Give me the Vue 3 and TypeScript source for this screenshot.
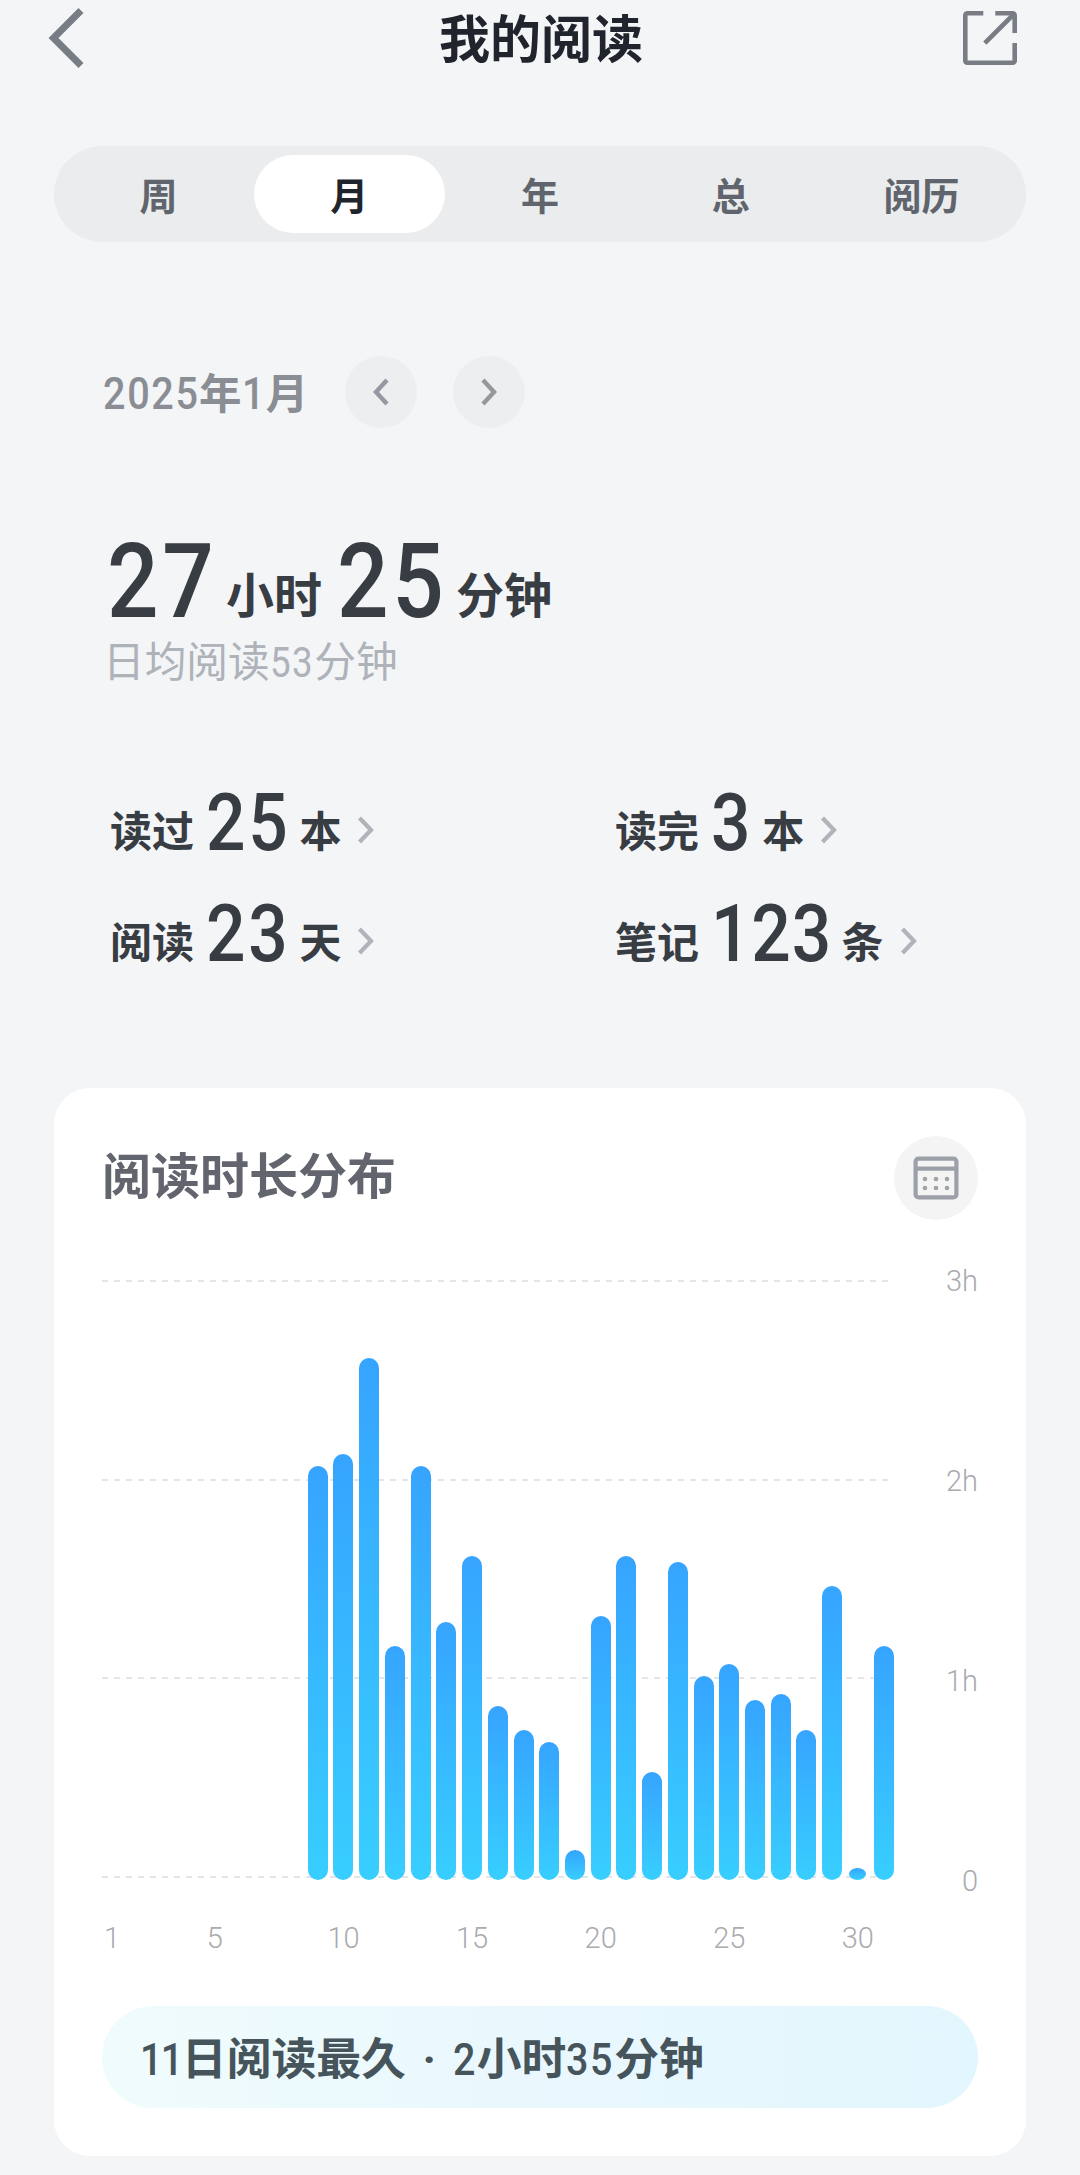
<script setup lang="ts">
import { h, type FunctionalComponent } from 'vue'

interface Stat {
  label: string
  value: string
  unit: string
}

// Condensed figures: every digit takes the same narrow cell
const DIGIT_WIDTH = 0.534
const Num: FunctionalComponent<{ text: string }> = (props) =>
  h('span', { class: 'num', style: { width: `${props.text.length * DIGIT_WIDTH}em` } }, props.text)

const tabs: string[] = ['周', '月', '年', '总', '阅历']
const activeTab = '月'

const stats: Stat[] = [
  { label: '读过', value: '25', unit: '本' },
  { label: '读完', value: '3', unit: '本' },
  { label: '阅读', value: '23', unit: '天' },
  { label: '笔记', value: '123', unit: '条' },
]

// Hours read on each day of the month
const hours: number[] = [
  0, 0, 0, 0, 0, 0, 0, 0, 2.07, 2.13, 2.61, 1.17, 2.07, 1.29, 1.62, 0.87, 0.75, 0.69, 0.15, 1.32,
  1.62, 0.54, 1.59, 1.02, 1.08, 0.9, 0.93, 0.75, 1.47, 0.06, 1.17,
]
const maxHours = 3
const yLabels: string[] = ['3h', '2h', '1h', '0']

const dayLabel = (day: number): string => (day === 1 || day % 5 === 0 ? String(day) : '')
const barHeight = (value: number): string => `${(value / maxHours) * 100}%`
</script>

<template>
  <main class="page">
    <header class="header">
      <svg class="back" width="40" height="62" viewBox="0 0 40 62" fill="none">
        <path d="M34 3.5 6.5 31 34 58.5" stroke="#787c84" stroke-width="7" />
      </svg>
      <h1 class="title">我的阅读</h1>
      <svg class="share" width="54" height="54" viewBox="0 0 54 54" fill="none" stroke="#787c84" stroke-width="4.6">
        <path d="M20.3 2.3H4.3a2 2 0 0 0-2 2v45.4a2 2 0 0 0 2 2h45.4a2 2 0 0 0 2-2V32" />
        <path d="M32.3 2.3h17.4a2 2 0 0 1 2 2V22" />
        <path d="M21.8 32.2 50.5 3.5" />
      </svg>
    </header>

    <nav class="tabs">
      <span v-for="t in tabs" :key="t" class="tab" :class="{ active: t === activeTab }">{{ t }}</span>
    </nav>

    <section class="period">
      <p class="date"><Num text="2025" />年<Num text="1" />月</p>
      <button class="round">
        <svg width="18" height="28" viewBox="0 0 18 28" fill="none">
          <path d="M15 2 4 14l11 12" stroke="#9598a0" stroke-width="4.4" />
        </svg>
      </button>
      <button class="round">
        <svg width="18" height="28" viewBox="0 0 18 28" fill="none">
          <path d="M3 2l11 12L3 26" stroke="#94979c" stroke-width="4.4" />
        </svg>
      </button>
    </section>

    <section class="total">
      <Num class="big" text="27" /><span class="unit">小时</span><Num class="big second" text="25" /><span class="unit">分钟</span>
    </section>
    <p class="average">日均阅读<Num text="53" />分钟</p>

    <section class="stats">
      <div v-for="s in stats" :key="s.label" class="stat">
        <span class="stat-text">{{ s.label }}</span>
        <Num class="stat-value" :class="{ long: s.value.length > 2 }" :text="s.value" />
        <span class="stat-text">{{ s.unit }}</span>
        <svg class="more" width="18" height="28" viewBox="0 0 18 28" fill="none">
          <path d="M2.5 2 14 14 2.5 26" stroke="#b0b3b9" stroke-width="4.2" />
        </svg>
      </div>
    </section>

    <section class="card">
      <div class="card-head">
        <h2 class="card-title">阅读时长分布</h2>
        <div class="calendar">
          <svg width="46" height="44" viewBox="0 0 46 44" fill="none">
            <rect x="2.6" y="2.6" width="40.8" height="38.8" rx="3" stroke="#9ca0a9" stroke-width="4.2" />
            <path d="M2.6 12.6h40.8" stroke="#9ca0a9" stroke-width="4.2" />
            <g fill="#a0a2a6">
              <circle cx="12" cy="23" r="2.3" />
              <circle cx="23" cy="23" r="2.3" />
              <circle cx="34" cy="23" r="2.3" />
              <circle cx="12" cy="32" r="2.3" />
              <circle cx="23" cy="32" r="2.3" />
              <circle cx="34" cy="32" r="2.3" />
            </g>
          </svg>
        </div>
      </div>

      <div class="chart">
        <div class="plot">
          <div class="lines">
            <i v-for="l in yLabels" :key="l" class="line"></i>
          </div>
          <div class="bars">
            <div v-for="(value, i) in hours" :key="i" class="slot">
              <div v-if="value > 0" class="bar" :class="{ tiny: value < 0.1 }" :style="{ height: barHeight(value) }"></div>
            </div>
          </div>
        </div>
        <div class="y-axis">
          <span v-for="l in yLabels" :key="l">{{ l }}</span>
        </div>
      </div>
      <div class="x-axis">
        <span v-for="d in hours.length" :key="d" class="tick">{{ dayLabel(d) }}</span>
      </div>

      <p class="longest">
        <Num class="ones" text="11" />日阅读最久<span class="sep">·</span><Num text="2" />小时<Num text="35" />分钟
      </p>
    </section>
  </main>
</template>

<style>
body {
  background: #f3f5f7;
}
</style>

<style scoped>
.page {
  width: 1080px;
  height: 2175px;
  box-sizing: border-box;
  overflow: hidden;
  display: flex;
  flex-direction: column;
  background: #f3f5f7;
  color: #383c43;
  font-family: Roboto, 'Noto Sans CJK SC', sans-serif;
  line-height: 1;
}
h1,
h2,
p {
  margin: 0;
  font-weight: 700;
}
.num {
  display: inline-block;
  font-weight: 500;
  letter-spacing: 0.041em;
  white-space: nowrap;
  transform: scaleX(0.88);
  transform-origin: 0 50%;
}
.header {
  height: 146px;
  box-sizing: border-box;
  padding: 7px 63px 0 47px;
  display: grid;
  grid-template-columns: 1fr auto 1fr;
  align-items: start;
}
.title {
  padding-top: 8px;
  margin-left: -16px;
  margin-right: -16px;
  transform: translateX(9px);
  font-size: 51px;
  color: #20242c;
}
.share {
  justify-self: end;
  margin-top: 4px;
}
.tabs {
  height: 96px;
  box-sizing: border-box;
  margin: 0 54px;
  padding: 9px;
  border-radius: 48px;
  background: #eaeced;
  display: flex;
}
.tab {
  flex: 1;
  box-sizing: border-box;
  padding-top: 6px;
  border-radius: 39px;
  display: flex;
  align-items: center;
  justify-content: center;
  font-size: 38px;
  font-weight: 700;
  color: #60646c;
}
.tab.active {
  background: #fff;
  color: #20242c;
}
.period {
  height: 72px;
  margin: 114px 0 0 102px;
  display: flex;
  align-items: center;
}
.date {
  width: 242px;
  padding: 4px 0 0 1px;
  font-size: 42.5px;
  white-space: nowrap;
  color: #8a8d94;
}
.date .num {
  font-size: 45px;
}
.round {
  width: 72px;
  height: 72px;
  margin-right: 36px;
  padding: 0;
  border: 0;
  border-radius: 50%;
  background: #edeef0;
  display: flex;
  align-items: center;
  justify-content: center;
}
.total {
  height: 103px;
  margin: 101px 0 0 107px;
  display: flex;
  align-items: baseline;
  white-space: nowrap;
}
.big {
  font-size: 103px;
  transform: translateY(1px) scaleX(0.88);
}
.unit {
  margin-left: 9px;
  font-size: 48px;
  font-weight: 700;
  transform: translateY(-3px);
}
.second {
  margin-left: 15px;
}
.average {
  height: 42px;
  margin: 10px 0 0 103px;
  font-size: 41.7px;
  font-weight: 400;
  color: #aeb2b9;
}
.average .num {
  font-weight: 400;
}
.stats {
  margin: 99px 0 0 110px;
  display: grid;
  grid-template-columns: 505px auto;
  grid-auto-rows: 79px;
  row-gap: 32px;
}
.stat {
  display: flex;
  align-items: baseline;
  white-space: nowrap;
}
.stat-text {
  font-size: 42px;
  font-weight: 700;
  transform: translateY(-2px);
}
.stat-value {
  margin: 0 9px 0 12px;
  font-size: 79px;
  transform: translateY(1px) scaleX(0.88);
}
.stat-value.long {
  margin-right: 4px;
  letter-spacing: 0.012em;
}
.more {
  align-self: flex-start;
  margin: 33px 0 0 16px;
}
.card {
  height: 1068px;
  box-sizing: border-box;
  margin: 115px 54px 0;
  padding: 48px;
  border-radius: 36px;
  background: #fff;
  display: flex;
  flex-direction: column;
}
.card-head {
  height: 84px;
  display: flex;
  justify-content: space-between;
  align-items: center;
}
.card-title {
  padding-bottom: 1px;
  font-size: 49px;
  color: #62656d;
}
.calendar {
  width: 84px;
  height: 84px;
  border-radius: 50%;
  background: #f4f4f5;
  display: flex;
  align-items: center;
  justify-content: center;
}
.chart {
  height: 600px;
  margin-top: 60px;
  display: flex;
  justify-content: space-between;
  align-items: flex-start;
}
.plot {
  width: 792px;
  height: 600px;
  display: grid;
}
.lines,
.bars {
  grid-area: 1 / 1;
  display: flex;
  justify-content: space-between;
}
.lines {
  width: 787px;
  height: 598px;
  flex-direction: column;
}
.line {
  height: 2px;
  background: repeating-linear-gradient(90deg, #e4e5e6 0 6px, transparent 6px 12px);
}
.slot {
  width: 20px;
  height: 600px;
  display: flex;
  align-items: flex-end;
  justify-content: center;
}
.bar {
  width: 20px;
  border-radius: 10px;
  background: linear-gradient(#36a4ff, #38ceff);
}
.bar.tiny {
  width: 17px;
  border-radius: 50%;
}
.y-axis {
  height: 629px;
  margin-top: -13px;
  display: flex;
  flex-direction: column;
  justify-content: space-between;
  align-items: flex-end;
  font-size: 29px;
  font-weight: 300;
  color: #a9abaf;
}
.x-axis {
  width: 792px;
  margin-top: 44px;
  height: 29px;
  display: flex;
  justify-content: space-between;
  font-size: 29px;
  font-weight: 300;
  color: #a9abaf;
}
.tick {
  width: 20px;
  display: flex;
  justify-content: center;
  white-space: nowrap;
}
.longest {
  height: 102px;
  box-sizing: border-box;
  margin-top: 53px;
  padding: 6px 0 0 38px;
  border-radius: 51px;
  background: linear-gradient(90deg, #f0fcfc, #eaf8fe 45%, #e2f6fd);
  display: flex;
  align-items: center;
  white-space: nowrap;
  font-size: 44.8px;
  color: #46545b;
}
.longest .ones {
  margin-right: -6px;
  letter-spacing: -0.04em;
}
.sep {
  width: 47px;
  text-align: center;
}
</style>
